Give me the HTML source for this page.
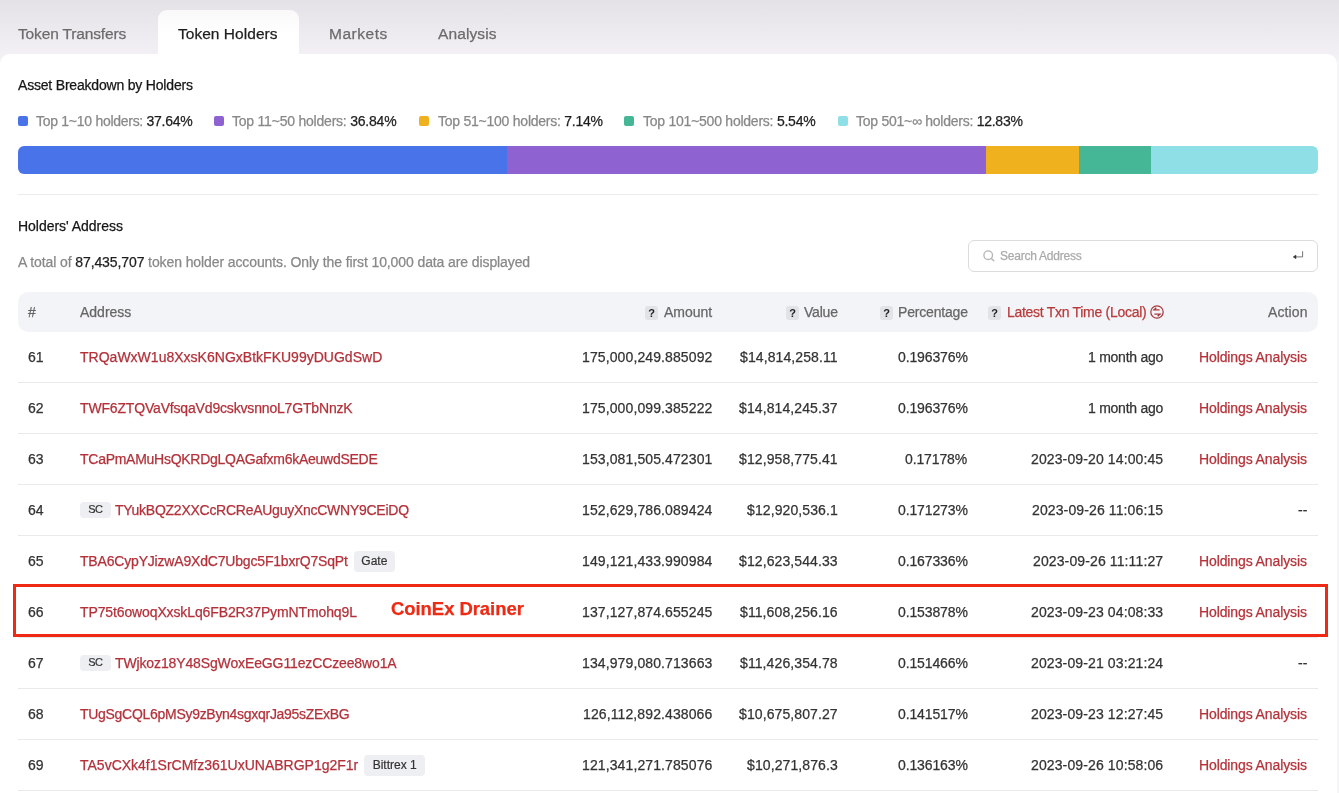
<!DOCTYPE html><html><head><meta charset="utf-8"><style>*{margin:0;padding:0;box-sizing:border-box}
html,body{width:1339px;height:793px;overflow:hidden;background:#f5f5f7}
body{font-family:"Liberation Sans",sans-serif;position:relative;color:#333}
.t{position:absolute;white-space:nowrap;will-change:transform;-webkit-text-stroke:0.25px currentColor}
.bg{position:absolute;left:0;top:0;width:1339px;height:60px;background:linear-gradient(#e4e2e7,#f2f0f4 90%,#f3f2f5)}
.rstrip{position:absolute;left:1337px;top:60px;width:2px;height:733px;background:#f5f5f7}
.tab{font-size:15.5px;line-height:20px;color:#6b6b6b}
.tab.act{color:#1e1e1e}
.tabact{position:absolute;left:158px;top:10px;width:141px;height:50px;background:linear-gradient(#f9f9fa,#fff 50%);border-radius:9px 9px 0 0}
.panel{position:absolute;left:0;top:54px;width:1337px;height:800px;background:#fff;border-radius:10px 10px 0 0}
.h1{font-size:14px;line-height:18px;color:#161616}
.sq{position:absolute;top:116px;width:10px;height:10px;border-radius:2px}
.lg{font-size:14px;line-height:18px;color:#1e1e1e}
.lg .lt{color:#888}
.bar{position:absolute;left:18px;top:146px;width:1300px;height:28px;border-radius:6px;overflow:hidden;display:flex}
.sep1{position:absolute;left:18px;top:194px;width:1300px;height:1px;background:#ececec}
.total{font-size:14px;line-height:18px;color:#888}
.total b{font-weight:normal;color:#1e1e1e}
.search{position:absolute;left:968px;top:240px;width:350px;height:32px;border:1px solid #dcdcdc;border-radius:6px}
.si{position:absolute;left:983px;top:250px;line-height:0}
.se{position:absolute;left:1292px;top:250px;line-height:0}
.sp{font-size:12px;line-height:16px;color:#aaa}
.thead{position:absolute;left:18px;top:292px;width:1300px;height:40px;background:#f3f4f7;border-radius:10px}
.th{font-size:14px;line-height:18px;color:#666}
.red{color:#b5333a !important}
.th.red{color:#b83a3b !important}
.q{position:absolute;will-change:transform;top:306px;width:13px;height:13.5px;border-radius:3px;background:#e2e3e6;color:#222;font-size:11px;line-height:14px;text-align:center;font-weight:bold}
.rowsep{position:absolute;left:18px;width:1300px;height:1px;background:#e9e9e9}
.c{font-size:14px;line-height:18px;color:#333}
.addr{color:#b3313a}
.tag{position:absolute;will-change:transform;-webkit-text-stroke:0.2px currentColor;background:#eeeff2;border-radius:4px;color:#333;text-align:center;white-space:nowrap}
.tag.sc{width:31px;height:15.5px;font-size:11px;line-height:15.5px;letter-spacing:-0.6px;text-indent:-0.6px}
.tag.gt{height:20.5px;font-size:12px;line-height:20.5px}
.anno{position:absolute;left:13px;top:583.5px;width:1315px;height:53px;border:3px solid #ee2a14}
.annot{font-size:18.5px;line-height:22px;font-weight:bold;color:#ee2a14}
</style></head><body>
<div class="bg"></div><div class="rstrip"></div>
<div class="tabact"></div>
<div id="t1" class="t tab" style="left:18px;top:23.5px;letter-spacing:-0.143px;">Token Transfers</div>
<div id="t2" class="t tab act" style="left:178px;top:23.5px;letter-spacing:0.033px;">Token Holders</div>
<div id="t3" class="t tab" style="left:329px;top:23.5px;letter-spacing:0.533px;">Markets</div>
<div id="t4" class="t tab" style="left:438px;top:23.5px;letter-spacing:0.114px;">Analysis</div>
<div class="panel"></div>
<div id="ab" class="t h1" style="left:18px;top:76px;letter-spacing:-0.192px;">Asset Breakdown by Holders</div>
<i class="sq" style="left:18px;background:#4873e9"></i>
<div id="lg1" class="t lg" style="left:35.5px;top:111.5px;letter-spacing:-0.278px;"><span class="lt">Top 1~10 holders:</span> 37.64%</div>
<i class="sq" style="left:214.3px;background:#8e62d1"></i>
<div id="lg2" class="t lg" style="left:232.4px;top:111.5px;letter-spacing:-0.217px;"><span class="lt">Top 11~50 holders:</span> 36.84%</div>
<i class="sq" style="left:419.1px;background:#f0b11e"></i>
<div id="lg3" class="t lg" style="left:437.6px;top:111.5px;letter-spacing:-0.242px;"><span class="lt">Top 51~100 holders:</span> 7.14%</div>
<i class="sq" style="left:624.1px;background:#46b796"></i>
<div id="lg4" class="t lg" style="left:642.5px;top:111.5px;letter-spacing:-0.240px;"><span class="lt">Top 101~500 holders:</span> 5.54%</div>
<i class="sq" style="left:838px;background:#8edfe6"></i>
<div id="lg5" class="t lg" style="left:855.8px;top:111.5px;letter-spacing:-0.258px;"><span class="lt">Top 501~∞ holders:</span> 12.83%</div>
<div class="bar"><div style="width:489px;background:#4873e9"></div><div style="width:479px;background:#8e62d1"></div><div style="width:93px;background:#f0b11e"></div><div style="width:72px;background:#46b796"></div><div style="flex:1;background:#8edfe6"></div></div>
<div class="sep1"></div>
<div id="hol" class="t h1" style="left:18px;top:217px;letter-spacing:-0.027px;">Holders' Address</div>
<div id="total" class="t total" style="left:18px;top:252.5px;letter-spacing:-0.102px;">A total of <b>87,435,707</b> token holder accounts. Only the first 10,000 data are displayed</div>
<div class="search"></div><div class="si"><svg width="12" height="12" viewBox="0 0 12 12"><circle cx="5.2" cy="5.2" r="4.3" fill="none" stroke="#b4b4b4" stroke-width="1.3"/><path d="M8.4 8.4L10.8 10.8" stroke="#b4b4b4" stroke-width="1.4" stroke-linecap="round"/></svg></div><div class="se"><svg width="12" height="10" viewBox="0 0 12 10"><path d="M10.6 1.2V6.9H3" fill="none" stroke="#666" stroke-width="0.9"/><path d="M4 5.1L1.2 6.9L4 8.7Z" fill="#333" stroke="#333" stroke-width="0.5" stroke-linejoin="round"/></svg></div>
<div id="sp" class="t sp" style="left:1000px;top:248px;letter-spacing:-0.231px;">Search Address</div>
<div class="thead"></div>
<div id="hash" class="t th" style="left:28px;top:303px;letter-spacing:0.000px;">#</div>
<div id="haddr" class="t th" style="left:80px;top:303px;letter-spacing:0.000px;">Address</div>
<div class="q" style="left:645px">?</div>
<div id="hamt" class="t th" style="right:626.5px;top:303px;letter-spacing:-0.040px;">Amount</div>
<div class="q" style="left:786.3px">?</div>
<div id="hval" class="t th" style="right:501px;top:303px;letter-spacing:-0.200px;">Value</div>
<div class="q" style="left:880.4px">?</div>
<div id="hpct" class="t th" style="right:371.5px;top:303px;letter-spacing:-0.178px;">Percentage</div>
<div class="q" style="left:988px">?</div>
<div id="htime" class="t th red" style="left:1006.5px;top:303px;letter-spacing:-0.291px;">Latest Txn Time (Local)</div>
<div style="position:absolute;left:1149px;top:304px"><svg class="swap" width="16" height="16" viewBox="0 0 16 16"><circle cx="8" cy="8" r="6.2" fill="none" stroke="#a83a3e" stroke-width="1.25"/><path d="M10.6 5.9H5L7.3 3.7" fill="none" stroke="#a83a3e" stroke-width="1.35" stroke-linejoin="miter"/><path d="M5.4 10.1H11L8.7 12.3" fill="none" stroke="#a83a3e" stroke-width="1.35" stroke-linejoin="miter"/></svg></div>
<div id="hact" class="t th" style="right:31.5px;top:303px;letter-spacing:0.120px;">Action</div>
<div class="rowsep" style="top:382px"></div>
<div id="n61" class="t c" style="left:28px;top:348px;letter-spacing:0.000px;">61</div>
<div id="a61" class="t c addr" style="left:80px;top:348px;letter-spacing:0.012px;">TRQaWxW1u8XxsK6NGxBtkFKU99yDUGdSwD</div>
<div id="m61" class="t c" style="right:626.5px;top:348px;letter-spacing:0.110px;">175,000,249.885092</div>
<div id="v61" class="t c" style="right:501px;top:348px;letter-spacing:0.100px;">$14,814,258.11</div>
<div id="p61" class="t c" style="right:371.5px;top:348px;letter-spacing:-0.120px;">0.196376%</div>
<div id="tm61" class="t c" style="right:175.5px;top:348px;letter-spacing:-0.250px;">1 month ago</div>
<div id="act61" class="t c red" style="right:31.799999999999955px;top:348px;letter-spacing:-0.113px;">Holdings Analysis</div>
<div class="rowsep" style="top:433px"></div>
<div id="n62" class="t c" style="left:28px;top:399px;letter-spacing:0.000px;">62</div>
<div id="a62" class="t c addr" style="left:80px;top:399px;letter-spacing:-0.170px;">TWF6ZTQVaVfsqaVd9cskvsnnoL7GTbNnzK</div>
<div id="m62" class="t c" style="right:626.5px;top:399px;letter-spacing:0.110px;">175,000,099.385222</div>
<div id="v62" class="t c" style="right:501px;top:399px;letter-spacing:0.100px;">$14,814,245.37</div>
<div id="p62" class="t c" style="right:371.5px;top:399px;letter-spacing:-0.120px;">0.196376%</div>
<div id="tm62" class="t c" style="right:175.5px;top:399px;letter-spacing:-0.250px;">1 month ago</div>
<div id="act62" class="t c red" style="right:31.799999999999955px;top:399px;letter-spacing:-0.113px;">Holdings Analysis</div>
<div class="rowsep" style="top:484px"></div>
<div id="n63" class="t c" style="left:28px;top:450px;letter-spacing:0.000px;">63</div>
<div id="a63" class="t c addr" style="left:80px;top:450px;letter-spacing:-0.267px;">TCaPmAMuHsQKRDgLQAGafxm6kAeuwdSEDE</div>
<div id="m63" class="t c" style="right:626.5px;top:450px;letter-spacing:0.110px;">153,081,505.472301</div>
<div id="v63" class="t c" style="right:501px;top:450px;letter-spacing:0.100px;">$12,958,775.41</div>
<div id="p63" class="t c" style="right:371.5px;top:450px;letter-spacing:-0.120px;">0.17178%</div>
<div id="tm63" class="t c" style="right:175.5px;top:450px;letter-spacing:0.120px;">2023-09-20 14:00:45</div>
<div id="act63" class="t c red" style="right:31.799999999999955px;top:450px;letter-spacing:-0.113px;">Holdings Analysis</div>
<div class="rowsep" style="top:535px"></div>
<div id="n64" class="t c" style="left:28px;top:501px;letter-spacing:0.000px;">64</div>
<div class="tag sc" style="left:80px;top:502px">SC</div>
<div id="a64" class="t c addr" style="left:115px;top:501px;letter-spacing:-0.261px;">TYukBQZ2XXCcRCReAUguyXncCWNY9CEiDQ</div>
<div id="m64" class="t c" style="right:626.5px;top:501px;letter-spacing:0.110px;">152,629,786.089424</div>
<div id="v64" class="t c" style="right:501px;top:501px;letter-spacing:0.100px;">$12,920,536.1</div>
<div id="p64" class="t c" style="right:371.5px;top:501px;letter-spacing:-0.120px;">0.171273%</div>
<div id="tm64" class="t c" style="right:175.5px;top:501px;letter-spacing:0.120px;">2023-09-26 11:06:15</div>
<div id="act64" class="t c" style="right:31.799999999999955px;top:501px;letter-spacing:0.000px;">--</div>
<div class="rowsep" style="top:586px"></div>
<div id="n65" class="t c" style="left:28px;top:552px;letter-spacing:0.000px;">65</div>
<div id="a65" class="t c addr" style="left:80px;top:552px;letter-spacing:-0.182px;">TBA6CypYJizwA9XdC7Ubgc5F1bxrQ7SqPt</div>
<div class="tag gt" style="left:354.3px;width:40.7px;top:550.5px">Gate</div>
<div id="m65" class="t c" style="right:626.5px;top:552px;letter-spacing:0.110px;">149,121,433.990984</div>
<div id="v65" class="t c" style="right:501px;top:552px;letter-spacing:0.100px;">$12,623,544.33</div>
<div id="p65" class="t c" style="right:371.5px;top:552px;letter-spacing:-0.120px;">0.167336%</div>
<div id="tm65" class="t c" style="right:175.5px;top:552px;letter-spacing:0.120px;">2023-09-26 11:11:27</div>
<div id="act65" class="t c red" style="right:31.799999999999955px;top:552px;letter-spacing:-0.113px;">Holdings Analysis</div>
<div class="rowsep" style="top:637px"></div>
<div id="n66" class="t c" style="left:28px;top:603px;letter-spacing:0.000px;">66</div>
<div id="a66" class="t c addr" style="left:80px;top:603px;letter-spacing:-0.121px;">TP75t6owoqXxskLq6FB2R37PymNTmohq9L</div>
<div id="m66" class="t c" style="right:626.5px;top:603px;letter-spacing:0.110px;">137,127,874.655245</div>
<div id="v66" class="t c" style="right:501px;top:603px;letter-spacing:0.100px;">$11,608,256.16</div>
<div id="p66" class="t c" style="right:371.5px;top:603px;letter-spacing:-0.120px;">0.153878%</div>
<div id="tm66" class="t c" style="right:175.5px;top:603px;letter-spacing:0.120px;">2023-09-23 04:08:33</div>
<div id="act66" class="t c red" style="right:31.799999999999955px;top:603px;letter-spacing:-0.113px;">Holdings Analysis</div>
<div class="rowsep" style="top:688px"></div>
<div id="n67" class="t c" style="left:28px;top:654px;letter-spacing:0.000px;">67</div>
<div class="tag sc" style="left:80px;top:655px">SC</div>
<div id="a67" class="t c addr" style="left:115px;top:654px;letter-spacing:-0.127px;">TWjkoz18Y48SgWoxEeGG11ezCCzee8wo1A</div>
<div id="m67" class="t c" style="right:626.5px;top:654px;letter-spacing:0.110px;">134,979,080.713663</div>
<div id="v67" class="t c" style="right:501px;top:654px;letter-spacing:0.100px;">$11,426,354.78</div>
<div id="p67" class="t c" style="right:371.5px;top:654px;letter-spacing:-0.120px;">0.151466%</div>
<div id="tm67" class="t c" style="right:175.5px;top:654px;letter-spacing:0.120px;">2023-09-21 03:21:24</div>
<div id="act67" class="t c" style="right:31.799999999999955px;top:654px;letter-spacing:0.000px;">--</div>
<div class="rowsep" style="top:739px"></div>
<div id="n68" class="t c" style="left:28px;top:705px;letter-spacing:0.000px;">68</div>
<div id="a68" class="t c addr" style="left:80px;top:705px;letter-spacing:-0.291px;">TUgSgCQL6pMSy9zByn4sgxqrJa95sZExBG</div>
<div id="m68" class="t c" style="right:626.5px;top:705px;letter-spacing:0.110px;">126,112,892.438066</div>
<div id="v68" class="t c" style="right:501px;top:705px;letter-spacing:0.100px;">$10,675,807.27</div>
<div id="p68" class="t c" style="right:371.5px;top:705px;letter-spacing:-0.120px;">0.141517%</div>
<div id="tm68" class="t c" style="right:175.5px;top:705px;letter-spacing:0.120px;">2023-09-23 12:27:45</div>
<div id="act68" class="t c red" style="right:31.799999999999955px;top:705px;letter-spacing:-0.113px;">Holdings Analysis</div>
<div class="rowsep" style="top:790px"></div>
<div id="n69" class="t c" style="left:28px;top:756px;letter-spacing:0.000px;">69</div>
<div id="a69" class="t c addr" style="left:80px;top:756px;letter-spacing:0.000px;">TA5vCXk4f1SrCMfz361UxUNABRGP1g2F1r</div>
<div class="tag gt" style="left:363.5px;width:61.3px;top:754.5px">Bittrex 1</div>
<div id="m69" class="t c" style="right:626.5px;top:756px;letter-spacing:0.110px;">121,341,271.785076</div>
<div id="v69" class="t c" style="right:501px;top:756px;letter-spacing:0.100px;">$10,271,876.3</div>
<div id="p69" class="t c" style="right:371.5px;top:756px;letter-spacing:-0.120px;">0.136163%</div>
<div id="tm69" class="t c" style="right:175.5px;top:756px;letter-spacing:0.120px;">2023-09-26 10:58:06</div>
<div id="act69" class="t c red" style="right:31.799999999999955px;top:756px;letter-spacing:-0.113px;">Holdings Analysis</div>
<div class="anno"></div>
<div id="annot" class="t annot" style="left:391px;top:598px;letter-spacing:-0.062px;">CoinEx Drainer</div>
</body></html>
